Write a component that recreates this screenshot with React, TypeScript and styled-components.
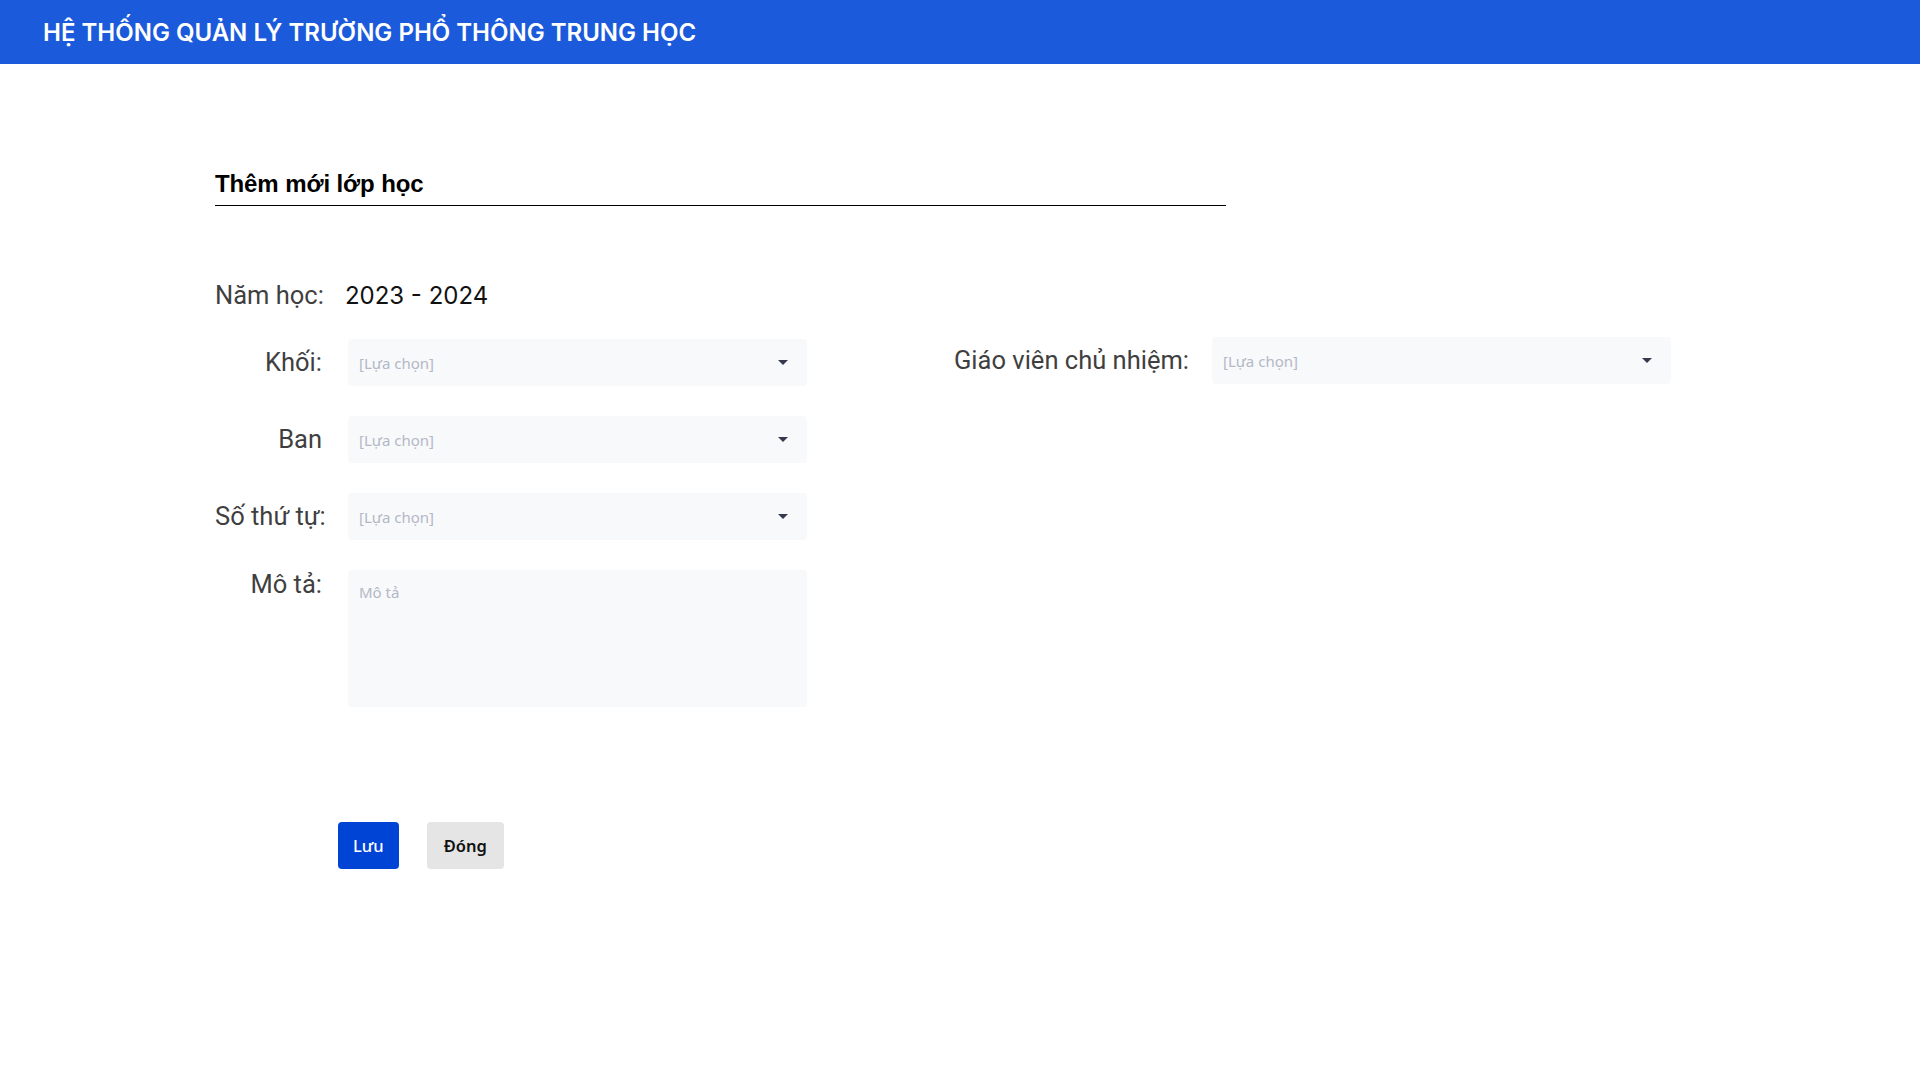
import React from "react";
import styled, { createGlobalStyle } from "styled-components";

const GlobalStyle = createGlobalStyle`
  * { box-sizing: border-box; }
  html, body { margin: 0; padding: 0; background: #ffffff; }
  body { font-family: Roboto, "Noto Sans", sans-serif; color: #222; }
`;

const Header = styled.header`
  height: 64px;
  background: #1b5bdb;
  display: flex;
  align-items: center;
  padding-left: 43px;
`;

const HeaderTitle = styled.h1`
  margin: 0;
  font-family: Inter, "Noto Sans", sans-serif;
  font-weight: 600;
  font-size: 24px;
  color: #ffffff;
  letter-spacing: 0;
`;

const Main = styled.main`
  padding: 106px 0 0 215px;
`;

const TitleBar = styled.div`
  width: 1011px;
  border-bottom: 1px solid #000;
  padding-bottom: 7px;
`;

const PageTitle = styled.h2`
  margin: 0;
  font-family: "Liberation Sans", Arial, sans-serif;
  font-weight: 700;
  font-size: 24px;
  line-height: 28px;
  color: #000;
  letter-spacing: -0.1px;
`;

const FormArea = styled.div`
  display: flex;
  margin-top: 65px;
  gap: 147px;
`;

const LeftCol = styled.div`
  width: 592px;
  display: flex;
  flex-direction: column;
`;

const RightCol = styled.div`
  padding-top: 66px;
`;

const YearRow = styled.div`
  height: 48px;
  display: flex;
  align-items: center;
  gap: 21px;
`;

const Label = styled.label<{ $width?: number; $top?: boolean }>`
  width: ${(p) => (p.$width ? `${p.$width}px` : "auto")};
  flex-shrink: 0;
  text-align: ${(p) => (p.$width ? "right" : "left")};
  font-family: Roboto, "Noto Sans", sans-serif;
  font-size: 25.5px;
  line-height: ${(p) => (p.$top ? "28px" : "47px")};
  color: #3f3f3f;
  white-space: nowrap;
`;

const YearValue = styled.span`
  font-family: Inter, "Noto Sans", sans-serif;
  font-size: 24px;
  color: #111;
`;

const FieldList = styled.div`
  margin-top: 20px;
  display: flex;
  flex-direction: column;
  gap: 30px;
`;

const FieldRow = styled.div<{ $gap?: number }>`
  display: flex;
  align-items: flex-start;
  gap: ${(p) => p.$gap ?? 26}px;
`;

const SelectBox = styled.div`
  width: 459px;
  height: 47px;
  background: #f8f9fb;
  border-radius: 4px;
  display: flex;
  align-items: center;
  justify-content: space-between;
  padding: 0 19px 0 11px;
  cursor: pointer;
`;

const Placeholder = styled.span`
  font-family: "Noto Sans", Inter, sans-serif;
  font-size: 15px;
  color: #b3b8c6;
`;

const Caret = styled.span`
  width: 0;
  height: 0;
  border-left: 5px solid transparent;
  border-right: 5px solid transparent;
  border-top: 5px solid #343a4c;
`;

const TextArea = styled.textarea`
  width: 459px;
  height: 137px;
  background: #f8f9fb;
  border: none;
  border-radius: 4px;
  padding: 12px 11px;
  resize: none;
  outline: none;
  font-family: "Noto Sans", Inter, sans-serif;
  font-size: 15px;
  color: #333;
  &::placeholder { color: #b3b8c6; }
`;

const ButtonRow = styled.div`
  display: flex;
  gap: 28px;
  margin: 115px 0 0 123px;
`;

const Button = styled.button<{ $primary?: boolean }>`
  height: 47px;
  padding: 0 ${(p) => (p.$primary ? "15px" : "17px")};
  border: none;
  border-radius: 4px;
  background: ${(p) => (p.$primary ? "#0044d6" : "#e5e5e5")};
  color: ${(p) => (p.$primary ? "#ffffff" : "#111")};
  font-family: "Noto Sans", Inter, sans-serif;
  font-size: 16.5px;
  font-weight: ${(p) => (p.$primary ? 500 : 600)};
  cursor: pointer;
`;

const SelectField: React.FC = () => (
  <SelectBox>
    <Placeholder>[Lựa chọn]</Placeholder>
    <Caret />
  </SelectBox>
);

export default function App() {
  return (
    <>
      <GlobalStyle />
      <Header>
        <HeaderTitle>HỆ THỐNG QUẢN LÝ TRƯỜNG PHỔ THÔNG TRUNG HỌC</HeaderTitle>
      </Header>
      <Main>
        <TitleBar>
          <PageTitle>Thêm mới lớp học</PageTitle>
        </TitleBar>
        <FormArea>
          <LeftCol>
            <YearRow>
              <Label>Năm học:</Label>
              <YearValue>2023 - 2024</YearValue>
            </YearRow>
            <FieldList>
              <FieldRow>
                <Label $width={107}>Khối:</Label>
                <SelectField />
              </FieldRow>
              <FieldRow>
                <Label $width={107}>Ban</Label>
                <SelectField />
              </FieldRow>
              <FieldRow>
                <Label $width={107}>Số thứ tự:</Label>
                <SelectField />
              </FieldRow>
              <FieldRow>
                <Label $width={107} $top>Mô tả:</Label>
                <TextArea placeholder="Mô tả" />
              </FieldRow>
            </FieldList>
          </LeftCol>
          <RightCol>
            <FieldRow $gap={23}>
              <Label>Giáo viên chủ nhiệm:</Label>
              <SelectField />
            </FieldRow>
          </RightCol>
        </FormArea>
        <ButtonRow>
          <Button $primary>Lưu</Button>
          <Button>Đóng</Button>
        </ButtonRow>
      </Main>
    </>
  );
}
